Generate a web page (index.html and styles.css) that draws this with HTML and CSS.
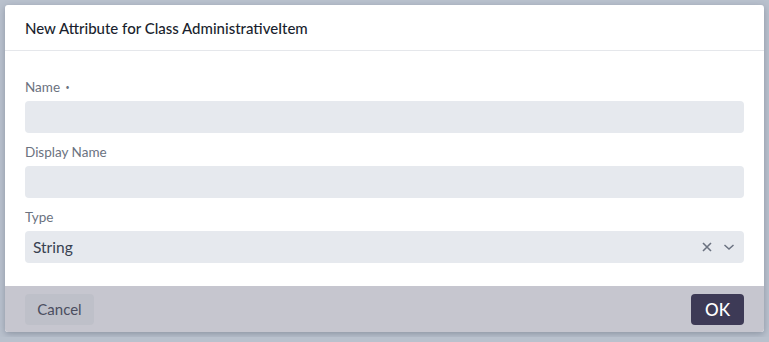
FILE: index.html
```html
<!DOCTYPE html>
<html lang="en">
<head>
    <meta charset="UTF-8">
    <title>New Attribute</title>
    <link rel="stylesheet" href="styles.css">
</head>
<body>
    <div class="dialog">
        <div class="dialog-header">
            <h2 class="dialog-title">New Attribute for Class AdministrativeItem</h2>
        </div>
        <div class="dialog-body">
            <div class="field">
                <label class="field-label">Name <span class="req">•</span></label>
                <div class="input"></div>
            </div>
            <div class="field">
                <label class="field-label">Display Name</label>
                <div class="input"></div>
            </div>
            <div class="field">
                <label class="field-label">Type</label>
                <div class="input select">
                    <span class="select-value">String</span>
                    <span class="select-icons">
                        <svg width="10" height="10" viewBox="0 0 10 10"><path d="M1 1L9 9M9 1L1 9" stroke="#6b7280" stroke-width="1.6" fill="none"/></svg>
                        <svg width="12" height="8" viewBox="0 0 12 8"><path d="M1.5 2L6 6L10.5 2" stroke="#6b7280" stroke-width="1.5" fill="none"/></svg>
                    </span>
                </div>
            </div>
        </div>
        <div class="dialog-footer">
            <button class="btn btn-cancel">Cancel</button>
            <button class="btn btn-ok">OK</button>
        </div>
    </div>
</body>
</html>
```

FILE: styles.css
```css
body{
    margin: 0;
    background-color: #b9c1cd;
    font-family: "Lato", "Noto Sans", sans-serif;
}
.dialog{
    margin: 5px;
    width: 759px;
    height: 327px;
    background-color: #fff;
    border-radius: 3px;
    box-shadow: 0 2px 6px rgba(60, 70, 90, 0.35);
    display: flex;
    flex-direction: column;
    overflow: hidden;
}
.dialog-header{
    height: 46px;
    border-bottom: 1px solid #e5e7eb;
    display: flex;
    align-items: flex-start;
    padding: 13px 20px 0;
    box-sizing: border-box;
}
.dialog-title{
    margin: 0;
    font-size: 15px;
    font-weight: 500;
    color: #1a1f2e;
    line-height: 20px;
}
.dialog-body{
    flex: 1;
    padding: 28px 20px 0;
}
.field{
    margin-bottom: 11px;
}
.field-label{
    display: block;
    font-size: 13.5px;
    line-height: 16px;
    color: #6b7280;
    margin-bottom: 6px;
}
.req{
    font-size: 7px;
    vertical-align: 2px;
    margin-left: 2px;
}
.input{
    height: 32px;
    background-color: #e6e9ee;
    border-radius: 4px;
}
.select{
    display: flex;
    align-items: center;
    justify-content: space-between;
    padding: 0 9px 0 8px;
}
.select-value{
    font-size: 15.5px;
    color: #374151;
}
.select-icons{
    display: flex;
    align-items: center;
    gap: 11px;
}
.dialog-footer{
    height: 46px;
    background-color: #c6c6cf;
    display: flex;
    align-items: center;
    justify-content: space-between;
    padding: 0 20px;
}
.btn{
    border: none;
    border-radius: 4px;
    font-family: inherit;
    height: 31px;
    font-size: 15px;
}
.btn-cancel{
    width: 69px;
    background-color: #bec0c9;
    color: #4b4e5f;
}
.btn-ok{
    width: 53px;
    background-color: #3d3a56;
    color: #fff;
    font-size: 17px;
    font-weight: 500;
}
```
